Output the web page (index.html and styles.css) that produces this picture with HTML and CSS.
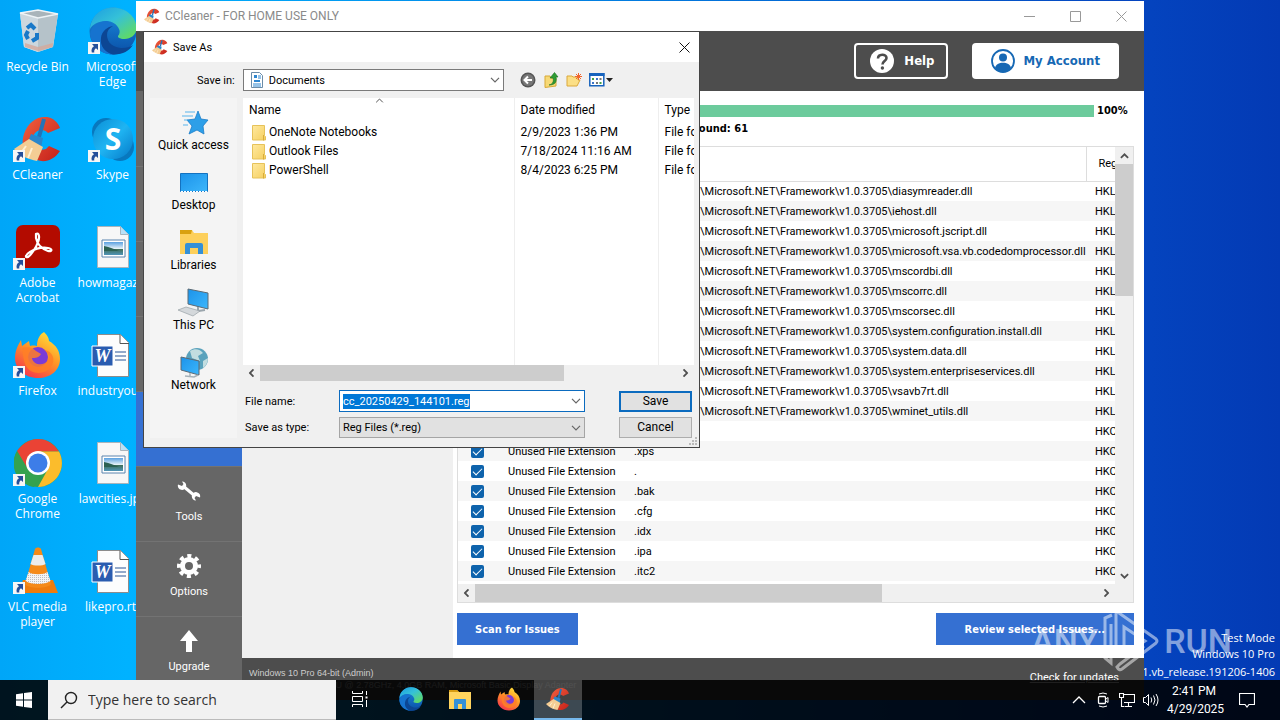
FILE: index.html
```html
<!DOCTYPE html>
<html lang="en">
<head>
<meta charset="utf-8">
<title>Desktop</title>
<link rel="stylesheet" href="styles.css">
</head>
<body>
<svg class="defs" aria-hidden="true">
  <defs>
    <linearGradient id="g-edge1" x1="0" y1="0" x2="1" y2="1"><stop offset="0" stop-color="#1b9de2"/><stop offset=".45" stop-color="#35c1d8"/><stop offset="1" stop-color="#6ae04a"/></linearGradient>
    <linearGradient id="g-edge2" x1="0" y1="0" x2="0" y2="1"><stop offset="0" stop-color="#1a8ee0"/><stop offset="1" stop-color="#0a4fa6"/></linearGradient>
    <linearGradient id="g-fox" x1=".8" y1="0" x2=".2" y2="1"><stop offset="0" stop-color="#ffe43b"/><stop offset=".45" stop-color="#ff9626"/><stop offset="1" stop-color="#f4304f"/></linearGradient>
    <linearGradient id="g-cc" x1="0" y1="0" x2="1" y2="1"><stop offset="0" stop-color="#f2603e"/><stop offset="1" stop-color="#c4201a"/></linearGradient>
    <linearGradient id="g-sky" x1="0" y1="0" x2="1" y2="1"><stop offset="0" stop-color="#0a8fd6"/><stop offset=".5" stop-color="#1fb4f2"/><stop offset="1" stop-color="#0579c8"/></linearGradient>
    <linearGradient id="g-screen" x1="0" y1="0" x2="1" y2="1"><stop offset="0" stop-color="#1c93ea"/><stop offset="1" stop-color="#3cb6fb"/></linearGradient>
    <linearGradient id="g-folder" x1="0" y1="0" x2="1" y2="1"><stop offset="0" stop-color="#ffe9a0"/><stop offset="1" stop-color="#f5cf5e"/></linearGradient>
    <linearGradient id="g-photo" x1="0" y1="0" x2="0" y2="1"><stop offset="0" stop-color="#5aa0e0"/><stop offset=".5" stop-color="#e4f1f8"/><stop offset=".55" stop-color="#3f6f58"/><stop offset="1" stop-color="#4f95b8"/></linearGradient>
    <pattern id="p-mesh" width="2" height="2" patternUnits="userSpaceOnUse"><rect width="2" height="2" fill="#f4f4f4"/><rect width="1" height="1" fill="#bdbdbd"/></pattern>
    <symbol id="i-link" viewBox="0 0 12 12"><path d="M0 0h12v12H0z" fill="#f6f6f6"/><path d="M4 2h6v6L8 6.200C6.500 7 6 8.500 6.300 10.500L3.800 10.500C3 7.500 4 5.500 6 4.200z" fill="#254f9a"/></symbol>
    <symbol id="i-bin" viewBox="0 0 48 48"><path d="M6 6l18-3 20 4-5 33-15 5-14-5z" fill="#dfe6ea"/><path d="M6 6l18 5v34l-14-5z" fill="#ccd7de"/><path d="M24 11l20-4-5 33-15 5z" fill="#b5c2c9"/><path d="M6 6l18-3 20 4-20 4z" fill="#a9b4ba" stroke="#eef3f6" stroke-width="1.500"/><path d="M11 36l13 4 15-4-.5 4L24 44l-13-4z" fill="#d4a99b" opacity=".8"/><path d="M13 21l4-3 4 4M23 26l0 5-5 3M14 32l-2-4 2-4" fill="none" stroke="#1878c8" stroke-width="4"/></symbol>
    <symbol id="i-edge" viewBox="0 0 48 48"><circle cx="24" cy="24" r="23.500" fill="url(#g-edge2)"/><path d="M1 22C2 9 12 .5 24 .5 37 .5 47.500 10 47.500 21c0 7-6 11-12 11-5 0-7-2-6.500-3 2-2.500 2-5 1-7C28 17 23 14 17 14 9 14 3 18 1 22z" fill="url(#g-edge1)"/><path d="M17 14C8 15 2 20 1 27c1 12 11 20.500 23 20.500-8-2-12-8-12-15C12 25 17 20 24 19c-2-3-4-5-7-5z" fill="#1673cf"/><path d="M24 19c-4 2-6 5-6 9 0 8 7 13 15 13 5 0 8-1 11-3-4 6-11 10-20 9.500C15 45 11 38 12 31c1-7 6-11 12-12z" fill="#0c4694"/></symbol>
    <symbol id="i-cc" viewBox="0 0 48 48"><path d="M46 13L34 18c-4-5-13-4-15 4-2 9 5 15 13 12l3-3 11 5C40 45 31 48 23 45 11 42 6 31 10 19 14 7 23 1 33 2c6 1 11 5 13 11z" fill="url(#g-cc)"/><path d="M30 4l-5 18" stroke="#2474b8" stroke-width="4"/><path d="M17 19l12 4-2 10-13-6z" fill="#2a86cc"/><path d="M15 24l14 8-6 14C14 44 6 41 0 34z" fill="#f4cd94"/><path d="M12 31l-5 7M18 33l-4 10" stroke="#fff0d2" stroke-width="2"/></symbol>
    <symbol id="i-skype" viewBox="0 0 48 48"><circle cx="17" cy="17" r="14" fill="#0878be"/><circle cx="31" cy="32" r="14" fill="#0878be"/><circle cx="24" cy="24" r="20" fill="url(#g-sky)"/><text x="24" y="35" class="glyph" font-size="30" text-anchor="middle" fill="#fff">S</text></symbol>
    <symbol id="i-acro" viewBox="0 0 48 48"><rect x="2" y="2" width="44" height="43" rx="7" fill="#b30b00"/><path d="M22 11c3-2 4 3 2 8-2 6-7 13-10 15-3 1-3-2 2-5 5-3 12-5 18-4 5 1 4 4 0 3-6-2-11-7-12-13z" fill="none" stroke="#fff" stroke-width="2.200"/></symbol>
    <symbol id="i-fox" viewBox="0 0 48 48"><path d="M30 1c4 4 5 7 5 9 7 4 11 10 11 18 0 11-9 19-22 19S1 38 1 27C1 20 4 14 7 9l1 6 7-5 1 5c4-1 6 0 7 0 0-7 3-12 7-14z" fill="url(#g-fox)"/><circle cx="24" cy="26" r="10" fill="#7b3bd6"/><path d="M8 17c6-2 11 0 14 3l5 3c-2 4-6 4-9 4 1 7 12 9 16 2 2-5-1-8-4-10 9 1 12 10 7 17-6 8-20 8-25-1-3-6-3-13-4-18z" fill="#ff7f26" opacity=".85"/></symbol>
    <symbol id="i-chrome" viewBox="0 0 48 48"><circle cx="24" cy="24" r="24" fill="#34a24f"/><path d="M24 0a24 24 0 0 1 21 12.500H24L13 30 3 12C8 5 15 0 24 0z" fill="#ea4335"/><path d="M45 12.500A24 24 0 0 1 24 48l10-18-10-17.500z" fill="#fbbc2c"/><path d="M3 12l11 18 10 5 3 1-7 12A24 24 0 0 1 3 12z" fill="#34a24f"/><circle cx="24" cy="24" r="12" fill="#fff"/><circle cx="24" cy="24" r="9.500" fill="#3d7de8"/></symbol>
    <symbol id="i-vlc" viewBox="0 0 48 48"><path d="M9 33h30l5 13H4z" fill="#ef7c0c"/><path d="M21 2c1-2 5-2 6 0l10 35c-3 5-23 5-26 0z" fill="#f58a18"/><path d="M19.500 8h9l3 9c-3 2-12 2-15 0z" fill="#ececec"/><path d="M14.500 25c4 3 15 3 19 0l3 9c-5 4-20 4-25 0z" fill="url(#p-mesh)"/></symbol>
    <symbol id="i-img" viewBox="0 0 48 48"><path d="M8.500 3.500h23l8 8v33h-31z" fill="#f7f7f7" stroke="#a9b4bc"/><path d="M31.500 3.500v8h8" fill="#b9e0f6" stroke="#a9b4bc"/><path d="M13 17h23v17H13z" fill="#fff" stroke="#5a84ae"/><path d="M15 19h19v13H15z" fill="url(#g-photo)"/><path d="M15 23c6 1 10 3 15 5H15z" fill="#2c6152"/></symbol>
    <symbol id="i-word" viewBox="0 0 48 48"><path d="M8.500 3.500h23l8 8v34h-31z" fill="#fdfdfd" stroke="#8c8c8c"/><path d="M31 3.500v9h9" fill="#fff" stroke="#555"/><path d="M26 21h11M26 25h11M26 29h11" stroke="#2a5699" stroke-width="1.200"/><path d="M3 15h21v20H3z" fill="#2a5cb0" stroke="#fff"/><text x="13.500" y="31" class="glyph glyph-serif" font-size="18" text-anchor="middle" fill="#fff">W</text></symbol>
    <symbol id="i-explorer" viewBox="0 0 24 24"><path d="M1 3h8l2 2h12v17H1z" fill="#ffd45e"/><path d="M1 3h8l2 2H1z" fill="#d79c12"/><path d="M6 22v-9q0-1 1-1h10q1 0 1 1v9h-4v-5h-4v5z" fill="#3490d8"/></symbol>
    <symbol id="i-folder" viewBox="0 0 14 16"><path d="M.5.500h12v10l1 1v3.500h-13z" fill="url(#g-folder)" stroke="#e6c25a"/><path d="M11.500 10v5.500" stroke="#d9ac38"/></symbol>
    <symbol id="i-down" viewBox="0 0 10 6"><path d="M1 .8l4 4 4-4" fill="none" stroke="currentColor" stroke-width="1.200"/></symbol>
    <symbol id="i-arrow" viewBox="0 0 10 6"><path d="M1 .8l4 4 4-4" fill="none" stroke="currentColor" stroke-width="2"/></symbol>
  </defs>
</svg>

<div class="screen">
  <nav class="desktop-icons" aria-label="Desktop">
    <div class="shortcut"><svg class="pic"><use href="#i-bin"/></svg><span>Recycle Bin</span></div>
    <div class="shortcut"><svg class="pic"><use href="#i-cc"/></svg><svg class="badge"><use href="#i-link"/></svg><span>CCleaner</span></div>
    <div class="shortcut"><svg class="pic"><use href="#i-acro"/></svg><svg class="badge"><use href="#i-link"/></svg><span>Adobe<br>Acrobat</span></div>
    <div class="shortcut"><svg class="pic"><use href="#i-fox"/></svg><svg class="badge"><use href="#i-link"/></svg><span>Firefox</span></div>
    <div class="shortcut"><svg class="pic"><use href="#i-chrome"/></svg><svg class="badge"><use href="#i-link"/></svg><span>Google<br>Chrome</span></div>
    <div class="shortcut"><svg class="pic"><use href="#i-vlc"/></svg><svg class="badge"><use href="#i-link"/></svg><span>VLC media<br>player</span></div>
    <div class="shortcut"><svg class="pic"><use href="#i-edge"/></svg><svg class="badge"><use href="#i-link"/></svg><span>Microsoft<br>Edge</span></div>
    <div class="shortcut"><svg class="pic"><use href="#i-skype"/></svg><svg class="badge"><use href="#i-link"/></svg><span>Skype</span></div>
    <div class="shortcut"><svg class="pic"><use href="#i-img"/></svg><span>howmagaz...</span></div>
    <div class="shortcut"><svg class="pic"><use href="#i-word"/></svg><span>industryou...</span></div>
    <div class="shortcut"><svg class="pic"><use href="#i-img"/></svg><span>lawcities.jpg</span></div>
    <div class="shortcut"><svg class="pic"><use href="#i-word"/></svg><span>likepro.rtf</span></div>
  </nav>

  <p class="build">Test Mode<br>Windows 10 Pro<br><span>Build 19041.vb_release.191206-1406</span></p>

  <section class="window" aria-label="CCleaner">
    <header class="titlebar">
      <svg class="app-icon"><use href="#i-cc"/></svg>
      <span class="title">CCleaner - FOR HOME USE ONLY</span>
      <button class="win-btn" aria-label="Minimize"><svg viewBox="0 0 11 11"><path d="M0 5.500h11"/></svg></button>
      <button class="win-btn" aria-label="Maximize"><svg viewBox="0 0 11 11"><path d="M.5.500h10v10H.5z"/></svg></button>
      <button class="win-btn" aria-label="Close"><svg viewBox="0 0 11 11"><path d="M.5.500l10 10M10.500.500l-10 10"/></svg></button>
    </header>
    <div class="banner">
      <button class="help"><svg viewBox="0 0 24 24"><circle cx="12" cy="12" r="12" fill="#fff"/><path d="M8 9.500c0-5 8.500-5 8.500-.5 0 3-4 3.200-4 6.500" fill="none" stroke="#4d4d4d" stroke-width="2.600"/><circle cx="12.400" cy="19" r="1.700" fill="#4d4d4d"/></svg>Help</button>
      <button class="account"><svg viewBox="0 0 24 24"><circle cx="12" cy="12" r="11" fill="#fff" stroke="#1668b4" stroke-width="1.800"/><circle cx="12" cy="8.500" r="4" fill="#1668b4"/><path d="M4 19c1-7 15-7 16 0-4 5-12 5-16 0z" fill="#1668b4"/></svg>My Account</button>
    </div>
    <div class="app">
      <nav class="rail" aria-label="Sections">
        <button aria-label="Health Check"></button>
        <button aria-label="Custom Clean"></button>
        <button aria-label="Performance Optimizer"></button>
        <button aria-label="Driver Updater"></button>
        <button class="current" aria-label="Registry"></button>
        <button><svg viewBox="0 0 24 24"><path d="M6 7l12 10" stroke="#fff" stroke-width="3"/><path d="M1 5.500a4.200 4.200 0 1 0 4-3l1.500 2.500-1.500 2z" fill="#fff"/><path d="M23 18.500a4.200 4.200 0 1 0-4 3l-1.500-2.500 1.500-2z" fill="#fff"/></svg>Tools</button>
        <button><svg viewBox="0 0 24 24"><circle cx="12" cy="12" r="6.500" fill="none" stroke="#fff" stroke-width="5"/><circle cx="12" cy="12" r="10" fill="none" stroke="#fff" stroke-width="4" stroke-dasharray="4 3.854" stroke-dashoffset="2"/></svg>Options</button>
        <button><svg viewBox="0 0 24 24"><path d="M12 1l9 11h-6v11H9V12H3z" fill="#fff"/></svg>Upgrade</button>
      </nav>
      <div class="work">
        <div class="panes">
          <aside class="tree"></aside>
          <main class="results">
            <div class="progress-row"><div class="progress"></div><b>100%</b></div>
            <p class="summary">Issues found: 61</p>
            <div class="grid-box">
              <div class="grid-view">
                <table class="issues">
                  <colgroup><col class="c-check"><col class="c-problem"><col class="c-data"><col class="c-key"></colgroup>
                  <thead><tr><th></th><th>Problem</th><th>Data</th><th>Registry Key</th></tr></thead>
                  <tbody>
                    <tr><td><input type="checkbox" checked aria-label="Select"></td><td>Missing Shared DLL</td><td>C:\WINDOWS\Microsoft.NET\Framework\v1.0.3705\diasymreader.dll</td><td>HKLM\Software</td></tr>
                    <tr><td><input type="checkbox" checked aria-label="Select"></td><td>Missing Shared DLL</td><td>C:\WINDOWS\Microsoft.NET\Framework\v1.0.3705\iehost.dll</td><td>HKLM\Software</td></tr>
                    <tr><td><input type="checkbox" checked aria-label="Select"></td><td>Missing Shared DLL</td><td>C:\WINDOWS\Microsoft.NET\Framework\v1.0.3705\microsoft.jscript.dll</td><td>HKLM\Software</td></tr>
                    <tr><td><input type="checkbox" checked aria-label="Select"></td><td>Missing Shared DLL</td><td>C:\WINDOWS\Microsoft.NET\Framework\v1.0.3705\microsoft.vsa.vb.codedomprocessor.dll</td><td>HKLM\Software</td></tr>
                    <tr><td><input type="checkbox" checked aria-label="Select"></td><td>Missing Shared DLL</td><td>C:\WINDOWS\Microsoft.NET\Framework\v1.0.3705\mscordbi.dll</td><td>HKLM\Software</td></tr>
                    <tr><td><input type="checkbox" checked aria-label="Select"></td><td>Missing Shared DLL</td><td>C:\WINDOWS\Microsoft.NET\Framework\v1.0.3705\mscorrc.dll</td><td>HKLM\Software</td></tr>
                    <tr><td><input type="checkbox" checked aria-label="Select"></td><td>Missing Shared DLL</td><td>C:\WINDOWS\Microsoft.NET\Framework\v1.0.3705\mscorsec.dll</td><td>HKLM\Software</td></tr>
                    <tr><td><input type="checkbox" checked aria-label="Select"></td><td>Missing Shared DLL</td><td>C:\WINDOWS\Microsoft.NET\Framework\v1.0.3705\system.configuration.install.dll</td><td>HKLM\Software</td></tr>
                    <tr><td><input type="checkbox" checked aria-label="Select"></td><td>Missing Shared DLL</td><td>C:\WINDOWS\Microsoft.NET\Framework\v1.0.3705\system.data.dll</td><td>HKLM\Software</td></tr>
                    <tr><td><input type="checkbox" checked aria-label="Select"></td><td>Missing Shared DLL</td><td>C:\WINDOWS\Microsoft.NET\Framework\v1.0.3705\system.enterpriseservices.dll</td><td>HKLM\Software</td></tr>
                    <tr><td><input type="checkbox" checked aria-label="Select"></td><td>Missing Shared DLL</td><td>C:\WINDOWS\Microsoft.NET\Framework\v1.0.3705\vsavb7rt.dll</td><td>HKLM\Software</td></tr>
                    <tr><td><input type="checkbox" checked aria-label="Select"></td><td>Missing Shared DLL</td><td>C:\WINDOWS\Microsoft.NET\Framework\v1.0.3705\wminet_utils.dll</td><td>HKLM\Software</td></tr>
                    <tr><td><input type="checkbox" checked aria-label="Select"></td><td>Unused File Extension</td><td>.oxps</td><td>HKCR</td></tr>
                    <tr><td><input type="checkbox" checked aria-label="Select"></td><td>Unused File Extension</td><td>.xps</td><td>HKCR</td></tr>
                    <tr><td><input type="checkbox" checked aria-label="Select"></td><td>Unused File Extension</td><td>.</td><td>HKCU</td></tr>
                    <tr><td><input type="checkbox" checked aria-label="Select"></td><td>Unused File Extension</td><td>.bak</td><td>HKCU</td></tr>
                    <tr><td><input type="checkbox" checked aria-label="Select"></td><td>Unused File Extension</td><td>.cfg</td><td>HKCU</td></tr>
                    <tr><td><input type="checkbox" checked aria-label="Select"></td><td>Unused File Extension</td><td>.idx</td><td>HKCU</td></tr>
                    <tr><td><input type="checkbox" checked aria-label="Select"></td><td>Unused File Extension</td><td>.ipa</td><td>HKCU</td></tr>
                    <tr><td><input type="checkbox" checked aria-label="Select"></td><td>Unused File Extension</td><td>.itc2</td><td>HKCU</td></tr>
                    <tr><td><input type="checkbox" checked aria-label="Select"></td><td></td><td></td><td></td></tr>
                  </tbody>
                </table>
              </div>
              <div class="vscroll"><button aria-label="Scroll up"><svg class="arrow up"><use href="#i-arrow"/></svg></button><div class="thumb"></div><button aria-label="Scroll down"><svg class="arrow"><use href="#i-arrow"/></svg></button></div>
              <div class="hscroll"><button aria-label="Scroll left"><svg class="arrow left"><use href="#i-arrow"/></svg></button><div class="thumb"></div><button aria-label="Scroll right"><svg class="arrow right"><use href="#i-arrow"/></svg></button></div>
              <div class="corner"></div>
            </div>
            <div class="actions"><button class="scan">Scan for Issues</button><button class="review">Review selected Issues...</button></div>
          </main>
        </div>
        <footer class="status"><p>Windows 10 Pro 64-bit (Admin)<br>Intel Core i5-6400 CPU @ 2.78GHz, 4.0GB RAM, Microsoft Basic Display Adapter</p><a href="#updates">Check for updates</a></footer>
      </div>
    </div>
  </section>

  <form class="dialog" role="dialog" aria-label="Save As">
    <header class="titlebar">
      <svg class="app-icon"><use href="#i-cc"/></svg>
      <span class="title">Save As</span>
      <button type="button" class="win-btn" aria-label="Close"><svg viewBox="0 0 11 11"><path d="M.5.500l10 10M10.500.500l-10 10"/></svg></button>
    </header>
    <div class="look">
      <label for="folder">Save in:</label>
      <div class="combo">
        <svg class="doc" viewBox="0 0 14 16"><path d="M1.500.500h8l3 3v12h-11z" fill="#fff" stroke="#6b8ca8"/><path d="M4 3h3v3H4zM4 8h6v2H4z" fill="#2f87d0"/><path d="M8 4h3M8 6h3M3 12h8M3 14h8" stroke="#2f87d0"/></svg>
        <select id="folder"><option>Documents</option></select>
        <svg class="chev"><use href="#i-down"/></svg>
      </div>
      <div class="tools">
        <button type="button" aria-label="Back"><svg viewBox="0 0 16 16"><circle cx="8" cy="8" r="7.500" fill="#555"/><circle cx="8" cy="8" r="6" fill="#777"/><path d="M12 8H5M8 4.500L4.500 8 8 11.500" fill="none" stroke="#fff" stroke-width="2"/></svg></button>
        <button type="button" aria-label="Up one level"><svg viewBox="0 0 16 16"><path d="M2 4h5l1 2h5v8l-11 1.500z" fill="#f7d976" stroke="#d8a937"/><path d="M6 13c4-1 5-4 4-7H7l4.500-5.500L15 5h-2c1 5-1 8-7 8z" fill="#2f9c34" stroke="#176f1f" stroke-width=".6"/></svg></button>
        <button type="button" aria-label="New folder"><svg viewBox="0 0 16 16"><path d="M1 4h5l1 1h5v3h2l-3 6H1z" fill="#fbdf86" stroke="#dba83a"/><path d="M12.500 1v7M9 4.500h7M10 2l5 5M15 2l-5 5" stroke="#f0642c"/></svg></button>
        <button type="button" class="views" aria-label="View menu"><svg viewBox="0 0 24 16"><path d="M.8 1.800h14v12H.8z" fill="#fff" stroke="#1763bd" stroke-width="1.500"/><path d="M0 1h15.500v3H0z" fill="#1763bd"/><path d="M3 6h2v2H3zM10.500 10h2v2h-2z" fill="#43a048"/><path d="M7 6h2v2H7zM3 10h2v2H3z" fill="#3c74c8"/><path d="M10.500 6h2v2h-2zM7 10h2v2H7z" fill="#777"/><path d="M17 6h7l-3.500 4z" fill="#222"/></svg></button>
      </div>
    </div>
    <div class="main">
      <nav class="places" aria-label="Places">
        <button type="button"><svg viewBox="0 0 32 32"><path d="M20 5l3 8 7 1-5 6 1 8-7-4-8 4 3-8-5-6 8-1z" fill="#2d9fe8" stroke="#1a7cc8" stroke-width=".8"/><path d="M7 6h10M4 10h11M6 14h4M5 19h5" stroke="#58b4ec" stroke-width="1.200"/></svg>Quick access</button>
        <button type="button"><svg viewBox="0 0 32 32"><path d="M2.500 7.500h27v18h-27z" fill="url(#g-screen)" stroke="#1472c0"/><path d="M3 25.500h26" stroke="#fff" stroke-dasharray="2 1"/></svg>Desktop</button>
        <button type="button"><svg viewBox="0 0 32 32"><path d="M2 4h12l2 3h14v21H2z" fill="#fdd05c"/><path d="M2 4h12l-1 4H2z" fill="#d9a110"/><path d="M7 28V19q0-2 2-2h14q2 0 2 2v9h-5v-6h-8v6z" fill="#3490d8"/></svg>Libraries</button>
        <button type="button"><svg viewBox="0 0 32 32"><path d="M10 3l20 4v16l-20-5z" fill="url(#g-screen)" stroke="#5c6a74"/><path d="M20 21v4l7-1" fill="none" stroke="#9ba6ad" stroke-width="2"/><path d="M0 24l8-3 14 4-7 5z" fill="#d4d8db" stroke="#98a0a6" stroke-width=".7"/></svg>This PC</button>
        <button type="button"><svg viewBox="0 0 32 32"><circle cx="19" cy="13" r="11" fill="#5aa2bc"/><path d="M12 5c5-3 10-2 13 2l-5 3 2 5-8-3zM25 15l5-3c0 4-2 8-5 10z" fill="#c2dde0"/><path d="M3 11l18 4v14L3 24z" fill="url(#g-screen)" stroke="#5c6a74"/><path d="M12 27v3M7 30l9 1 4-2" stroke="#a7b2b9" stroke-width="1.500" fill="none"/></svg>Network</button>
      </nav>
      <div class="fields">
        <div class="files">
          <svg class="sort"><use href="#i-down"/></svg>
          <table class="listing">
            <colgroup><col class="f-name"><col class="f-date"><col class="f-type"></colgroup>
            <thead><tr><th>Name</th><th>Date modified</th><th>Type</th></tr></thead>
            <tbody>
              <tr><td><svg><use href="#i-folder"/></svg>OneNote Notebooks</td><td>2/9/2023 1:36 PM</td><td>File folder</td></tr>
              <tr><td><svg><use href="#i-folder"/></svg>Outlook Files</td><td>7/18/2024 11:16 AM</td><td>File folder</td></tr>
              <tr><td><svg><use href="#i-folder"/></svg>PowerShell</td><td>8/4/2023 6:25 PM</td><td>File folder</td></tr>
              <tr class="rest"><td></td><td></td><td></td></tr>
            </tbody>
          </table>
        </div>
        <div class="hscroll"><button type="button" aria-label="Scroll left"><svg class="arrow left"><use href="#i-arrow"/></svg></button><div class="thumb"></div><button type="button" aria-label="Scroll right"><svg class="arrow right"><use href="#i-arrow"/></svg></button></div>
        <div class="entry">
          <label for="fname">File name:</label>
          <div class="combo active"><input id="fname" type="text" value="cc_20250429_144101.reg"><svg class="chev"><use href="#i-down"/></svg></div>
          <button type="submit" class="plain default">Save</button>
          <label for="ftype">Save as type:</label>
          <div class="combo grey"><select id="ftype"><option>Reg Files (*.reg)</option></select><svg class="chev"><use href="#i-down"/></svg></div>
          <button type="button" class="plain">Cancel</button>
        </div>
      </div>
    </div>
    <svg class="grip" viewBox="0 0 9 9"><path d="M7 0h2v2H7zM4 3h2v2H4zM7 3h2v2H7zM1 6h2v2H1zM4 6h2v2H4zM7 6h2v2H7z" fill="#bbb"/></svg>
  </form>

  <div class="watermark"><span>ANY</span><svg viewBox="0 0 56 62"><path d="M9 5L2 8v40l6 5V14M13 46V4q0-3 3-1l37 26q2 2 0 4L19 59q-3 2-5-2l3-3 24-18M21 42V17l21 14-21 14" fill="none" stroke="#fff" stroke-width="3"/></svg><span>RUN</span></div>

  <footer class="taskbar">
    <button class="start" aria-label="Start"><svg viewBox="0 0 16 16"><path d="M0 2.200L7 1.200v6.300H0zM8 1l8-1v7.500H8zM0 8.500h7v6.300L0 13.800zM8 8.500h8V16l-8-1z" fill="#fff"/></svg></button>
    <label class="search"><svg viewBox="0 0 18 18"><circle cx="11" cy="7" r="5.500" fill="none" stroke="#222" stroke-width="1.400"/><path d="M7 11l-6 6" stroke="#222" stroke-width="1.400"/></svg><input type="text" placeholder="Type here to search" aria-label="Type here to search"></label>
    <button class="task" aria-label="Task View"><svg class="small" viewBox="0 0 16 16"><path d="M.5 0v2.500h10V0M.5 5.500h10v5H.5zM.5 16v-2.500h10V16M14.500 0v4M14.500 9v7" fill="none" stroke="#fff"/><path d="M13.500 5.500h2v2h-2z" fill="#fff"/></svg></button>
    <div class="pinned">
      <button class="task" aria-label="Microsoft Edge"><svg><use href="#i-edge"/></svg></button>
      <button class="task" aria-label="File Explorer"><svg><use href="#i-explorer"/></svg></button>
      <button class="task" aria-label="Firefox"><svg><use href="#i-fox"/></svg></button>
      <button class="task open" aria-label="CCleaner"><svg><use href="#i-cc"/></svg></button>
    </div>
    <div class="tray">
      <svg viewBox="0 0 16 16"><path d="M2 11l6-6 6 6" fill="none" stroke="#fff" stroke-width="1.300"/></svg>
      <svg viewBox="0 0 16 16"><path d="M4 2q4-2 8 0M4 14q4 2 8 0" fill="none" stroke="#fff"/><rect x="3.500" y="4.500" width="7" height="7" rx="1" fill="none" stroke="#fff" stroke-width="1.300"/><path d="M11 7l2-1.500v5L11 9" fill="none" stroke="#fff"/></svg>
      <svg viewBox="0 0 16 16"><path d="M5 2.500h10.500v8H5M6 14.500h7M9.500 11v3.500M.5 1.500h4v4h-4zM2.500 5.500v9h3" fill="none" stroke="#fff" stroke-width="1.100"/></svg>
      <svg viewBox="0 0 16 16"><path d="M.5 5.500h2l3-3v11l-3-3h-2zM8 5.500q1.500 2.500 0 5M10.500 3.500q3 4.500 0 9M13 2q4 6 0 12" fill="none" stroke="#fff"/></svg>
      <time>2:41 PM<br>4/29/2025</time>
      <button class="note" aria-label="Notifications"><svg viewBox="0 0 16 16"><path d="M.5 1.500h15v11H10L8 15l-2-2.500H.5z" fill="none" stroke="#fff" stroke-width="1.200"/></svg></button>
    </div>
  </footer>
</div>
</body>
</html>
```
FILE: styles.css
```css
* { box-sizing: border-box; }

body {
  margin: 0;
  font-family: Roboto, "Open Sans", sans-serif;
  font-size: 11px;
  line-height: 15px;
  color: #000;
}

p { margin: 0; }

button {
  margin: 0;
  padding: 0;
  border: 0;
  background: none;
  color: inherit;
  font: inherit;
}

svg { display: block; flex: none; }

.defs { position: absolute; width: 0; height: 0; }
.glyph { font-family: "Open Sans", sans-serif; font-weight: 700; }
.glyph-serif { font-family: "Liberation Serif", serif; font-style: italic; }

.screen {
  position: relative;
  height: 100vh;
  overflow: hidden;
  background: linear-gradient(90deg, #00a6f8 0, #00b2ff 10%, #0444bf 89%, #033ab4 100%);
}

/* Desktop */
.desktop-icons {
  display: grid;
  grid-template-rows: repeat(6, 108px);
  grid-auto-columns: 75px;
  grid-auto-flow: column;
}

.shortcut {
  position: relative;
  display: flex;
  flex-direction: column;
  align-items: center;
  padding-top: 7px;
  gap: 4px;
  color: #fff;
  font-family: "Open Sans", sans-serif;
  font-size: 12px;
  text-align: center;
  white-space: nowrap;
}

.pic { width: 48px; height: 48px; }
.badge { position: absolute; left: 13px; top: 42px; width: 12px; height: 12px; }

.build {
  position: absolute;
  right: 5px;
  bottom: 38px;
  color: #fff;
  font-family: "Open Sans", sans-serif;
  line-height: 16px;
  text-align: right;
}
.build span { line-height: 20px; }

/* Windows */
.window {
  position: absolute;
  inset: 1px 136px 20px 136px;
  display: flex;
  flex-direction: column;
  background: #fff;
}

.titlebar {
  display: flex;
  align-items: center;
  height: 30px;
  padding-left: 8px;
  background: #fff;
}
.app-icon { width: 16px; height: 16px; }
.title { flex: 1; padding-left: 5px; }
.window .title { color: #8a8a8a; font-size: 12px; }
.win-btn { display: grid; place-items: center; width: 46px; height: 30px; }
.win-btn svg { width: 11px; height: 11px; fill: none; stroke: #999; }
.dialog .win-btn { width: 30px; }
.dialog .win-btn svg { stroke: #111; }

.banner {
  display: flex;
  justify-content: flex-end;
  align-items: center;
  gap: 24px;
  height: 60px;
  padding-right: 25px;
  background: #4d4d4d;
  font: bold 13px/16px "DejaVu Sans Condensed", "DejaVu Sans", sans-serif;
}
.banner button { display: flex; align-items: center; height: 36px; border-radius: 4px; }
.banner svg { width: 24px; height: 24px; }
.help { gap: 10px; padding: 0 12px 0 14px; border: 2px solid #fff; color: #fff; }
.account { gap: 8px; padding: 0 18px; background: #fff; color: #1668b4; font-size: 13px; }
.banner .account { padding: 0 19px; }

.app { display: flex; flex: 1; min-height: 0; }

.rail { width: 106px; flex: none; overflow: hidden; padding-top: 1px; background: #666; color: #fff; }
.rail button {
  display: flex;
  flex-direction: column;
  align-items: center;
  justify-content: center;
  gap: 6px;
  width: 100%;
  height: 75px;
  padding-bottom: 5px;
  border-bottom: 1px solid #737373;
}
.rail svg { width: 24px; height: 24px; }
.rail .current { background: #3570d2; }

.work { display: flex; flex: 1; flex-direction: column; min-width: 0; }
.panes { display: flex; flex: 1; min-height: 0; }
.tree { width: 211px; flex: none; background: #f0f0f0; }

.results {
  display: flex;
  flex: 1;
  flex-direction: column;
  min-width: 0;
  padding: 12px 10px 13px 4px;
}
.progress-row,
.summary,
.actions { font: bold 11px/15px "DejaVu Sans Condensed", "DejaVu Sans", sans-serif; }
.progress-row { display: flex; align-items: center; gap: 3px; }
.progress { flex: 1; height: 12px; background: #6ccb9c; }
.progress-row b { width: 37px; }
.summary { padding: 3px 0 10px 199px; }

.grid-box {
  display: grid;
  grid-template: minmax(0, 1fr) 18px / minmax(0, 1fr) 18px;
  flex: 1;
  min-height: 0;
  border: 1px solid #ddd;
}
.grid-view { overflow: hidden; }
.issues {
  width: calc(100% + 120px);
  border-collapse: collapse;
  table-layout: fixed;
  white-space: nowrap;
}
.c-check { width: 50px; }
.c-problem { width: 126px; }
.c-key { width: 149px; }
.issues th { height: 34px; padding: 0; border-bottom: 1px solid #ddd; font-weight: 400; text-align: left; }
.issues th:last-child { padding-left: 12px; border-left: 1px solid #ddd; }
.issues td { height: 20px; padding: 0; }
.issues td:last-child { padding-left: 9px; }
.issues tbody tr:nth-child(even) { background: #f6f6f6; }
.issues input {
  display: block;
  appearance: none;
  width: 13px;
  height: 13px;
  margin: 0 0 0 13px;
  border-radius: 2px;
  background: #0e63ac;
}
.issues input::before {
  content: "";
  display: block;
  width: 8px;
  height: 4px;
  margin: 3px 0 0 2px;
  border: solid #fff;
  border-width: 0 0 1px 1px;
  rotate: -45deg;
}

.vscroll { display: flex; flex-direction: column; background: #f0f0f0; }
.vscroll button { display: grid; place-items: center; height: 17px; }
.vscroll .thumb { height: 132px; margin-bottom: auto; background: #cdcdcd; }
.corner { background: #f0f0f0; }
.hscroll { display: flex; background: #f0f0f0; }
.hscroll button { display: grid; place-items: center; width: 17px; }
.hscroll .thumb { width: 62%; margin-right: auto; background: #cdcdcd; }
.arrow { width: 9px; height: 6px; color: #505050; }
.up { rotate: 180deg; }
.left { rotate: 90deg; }
.right { rotate: -90deg; }

.actions { display: flex; justify-content: space-between; padding-top: 10px; color: #fff; }
.actions button { height: 32px; padding: 0 18px; background: #3570d2; }
.actions .review { padding: 0 29px; }

.status {
  display: flex;
  justify-content: space-between;
  height: 42px;
  padding: 9px 25px 0 7px;
  background: #4d4d4d;
  color: #ccc;
  font: 9px/12px "Liberation Sans", Arial, sans-serif;
}
.status a { color: #fff; font: 11px/22px Roboto, sans-serif; }

/* Save As */
.dialog {
  position: absolute;
  left: 143px;
  top: 31px;
  width: 557px;
  border: 1px solid #444;
  background: #f0f0f0;
}
.look { display: flex; align-items: center; padding: 7px 0 7px 53px; gap: 8px; }

.combo {
  position: relative;
  display: flex;
  align-items: center;
  height: 22px;
  padding: 0 3px;
  border: 1px solid #7a7a7a;
  background: #fff;
}
.combo select,
.combo input {
  appearance: none;
  height: 15px;
  margin: 0;
  padding: 0;
  border: 0;
  background: none;
  color: #000;
  font: inherit;
}
.combo select { flex: 1; }
.combo .chev { width: 10px; height: 6px; margin-left: auto; color: #666; }
.look .combo { width: 261px; }
.doc { width: 14px; height: 16px; margin: 0 5px 0 3px; }
.combo.active { border-color: #0b6bbf; }
.combo.active input { width: 127px; background: #0078d7; color: #fff; }
.combo.grey { border-color: #a5a5a5; background: #e1e1e1; }

.tools { display: flex; align-items: center; gap: 7px; padding-left: 8px; }
.tools svg { width: 16px; height: 16px; }
.tools .views svg { width: 24px; }

.main { display: flex; padding: 0 5px 9px 6px; gap: 6px; }
.places { width: 87px; flex: none; padding-top: 1px; background: #f4f4f4; font-size: 12px; }
.places button {
  display: flex;
  flex-direction: column;
  align-items: center;
  justify-content: center;
  width: 100%;
  height: 60px;
}
.places svg { width: 32px; height: 32px; }

.fields { flex: 1; min-width: 0; }
.files { position: relative; height: 267px; overflow: hidden; background: #fff; }
.sort { position: absolute; left: 132px; top: 0; width: 9px; height: 5px; color: #555; rotate: 180deg; }
.listing {
  width: 580px;
  height: 267px;
  border-collapse: collapse;
  table-layout: fixed;
  font-size: 12px;
  white-space: nowrap;
}
.f-name { width: 271px; }
.f-date { width: 144px; }
.listing th { height: 25px; padding: 0 6px; font-weight: 400; text-align: left; }
.listing td { height: 19px; padding: 0 6px; }
.listing td + td,
.listing th + th { border-left: 1px solid #eee; }
.listing td:first-child { padding-left: 9px; }
.listing svg { float: left; width: 14px; height: 16px; margin-right: 3px; }
.listing .rest td { height: auto; }
.fields .hscroll { height: 16px; }
.fields .hscroll .thumb { width: 304px; }

.entry {
  display: grid;
  grid-template-columns: 96px 246px 73px;
  align-items: center;
  row-gap: 5px;
  padding: 9px 0 0;
}
.entry label { padding-left: 2px; }
.entry .combo { height: 21px; }
.entry .active { height: 22px; }
.plain {
  width: 73px;
  height: 21px;
  margin-left: 34px;
  border: 1px solid #adadad;
  background: #e1e1e1;
  font-size: 12px;
}
.plain.default { border: 2px solid #0b6bbf; }
.grip { position: absolute; right: 2px; bottom: 1px; width: 9px; height: 9px; }

/* Overlay mark */
.watermark {
  position: absolute;
  right: 48px;
  bottom: 48px;
  display: flex;
  align-items: center;
  gap: 5px;
  color: #fff;
  font: 500 34px/40px Roboto, sans-serif;
  opacity: .5;
}
.watermark svg { width: 56px; height: 62px; }

/* Taskbar */
.taskbar {
  position: absolute;
  inset: auto 0 0 0;
  display: flex;
  height: 40px;
  background: rgba(0, 0, 0, .88);
  color: #fff;
}
.start { display: grid; place-items: center; width: 48px; }
.start svg { width: 16px; height: 16px; }
.search {
  display: flex;
  align-items: center;
  gap: 10px;
  width: 288px;
  padding-left: 12px;
  background: #f1f1f1;
  border-bottom: 1px solid #bbb;
}
.search svg { width: 18px; height: 18px; }
.search input {
  flex: 1;
  min-width: 0;
  padding: 1px 0 0;
  border: 0;
  background: none;
  font: 14px/20px "Open Sans", sans-serif;
}
.search input::placeholder { color: #333; }
.task { display: grid; place-items: center; width: 48px; border-bottom: 2px solid transparent; }
.pinned { display: flex; gap: 1px; padding-left: 3px; }
.task svg { width: 24px; height: 24px; }
.task .small { width: 16px; height: 16px; }
.task.open { border-color: #76b9ed; background: rgba(255, 255, 255, .24); }
.tray { display: flex; align-items: center; gap: 8px; margin-left: auto; padding-right: 25px; }
.tray svg { width: 16px; height: 16px; }
.tray time { width: 54px; font: 12px/18px Roboto, sans-serif; text-align: center; }
.note { padding-left: 10px; }
```
